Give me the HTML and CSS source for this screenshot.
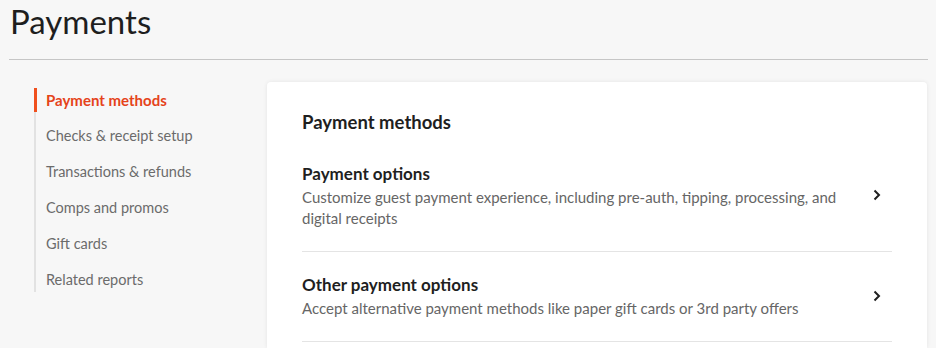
FILE: index.html
```html
<!DOCTYPE html>
<html lang="en">
<head>
  <meta charset="UTF-8">
  <meta name="viewport" content="width=device-width, initial-scale=1.0">
  <title>Payments</title>
  <link rel="stylesheet" href="styles.css">
</head>
<body>

  <header class="page-head">
    <h1>Payments</h1>
  </header>

  <div class="layout">
    <nav class="side-nav">
      <a href="#" class="nav-item active">Payment methods</a>
      <a href="#" class="nav-item">Checks &amp; receipt setup</a>
      <a href="#" class="nav-item">Transactions &amp; refunds</a>
      <a href="#" class="nav-item">Comps and promos</a>
      <a href="#" class="nav-item">Gift cards</a>
      <a href="#" class="nav-item">Related reports</a>
    </nav>

    <main class="card">
      <h2>Payment methods</h2>

      <a href="#" class="option">
        <div class="option-text">
          <h3>Payment options</h3>
          <p>Customize guest payment experience, including pre-auth, tipping, processing, and digital receipts</p>
        </div>
        <svg class="chevron" width="8" height="12" viewBox="0 0 8 12"><path d="M1.5 1.5 L6 6 L1.5 10.5" fill="none" stroke="#1f1f1f" stroke-width="2"/></svg>
      </a>

      <a href="#" class="option">
        <div class="option-text">
          <h3>Other payment options</h3>
          <p>Accept alternative payment methods like paper gift cards or 3rd party offers</p>
        </div>
        <svg class="chevron" width="8" height="12" viewBox="0 0 8 12"><path d="M1.5 1.5 L6 6 L1.5 10.5" fill="none" stroke="#1f1f1f" stroke-width="2"/></svg>
      </a>
    </main>
  </div>

</body>
</html>
```

FILE: styles.css
```css
* {
  box-sizing: border-box;
}

body {
  margin: 0;
  padding: 0;
  background-color: #f7f7f7;
  font-family: Lato, "Liberation Sans", sans-serif;
  color: #252525;
  overflow: hidden;
}

.page-head {
  margin: 0 8px 0 9px;
  border-bottom: 1px solid #c6c6c6;
  height: 60px;
}

.page-head h1 {
  margin: 0;
  padding: 0 0 0 1px;
  font-family: Lato, sans-serif;
  font-weight: 400;
  font-size: 33px;
  line-height: 42px;
  color: #1e1e1e;
}

.layout {
  display: flex;
  padding: 22px 9px 0 34px;
}

.side-nav {
  width: 233px;
  flex-shrink: 0;
  align-self: flex-start;
  display: flex;
  flex-direction: column;
  gap: 12px;
  margin-top: 6px;
  border-left: 2px solid #e2e2e2;
}

.nav-item {
  position: relative;
  display: block;
  padding-left: 10px;
  font-size: 14.5px;
  line-height: 24px;
  color: #6b6b6b;
  text-decoration: none;
}

.nav-item.active {
  color: #e5431a;
  font-weight: 700;
  font-size: 15px;
}

.nav-item.active::before {
  content: "";
  position: absolute;
  left: -2px;
  top: 0;
  bottom: 0;
  width: 3px;
  background-color: #f0501e;
}

.card {
  flex: 1;
  background-color: #fff;
  border-radius: 4px 4px 0 0;
  box-shadow: 0 0 4px rgba(0, 0, 0, 0.08);
  padding: 28px 35px 0 35px;
  height: 266px;
}

.card h2 {
  margin: 0 0 7px;
  font-size: 18.5px;
  line-height: 24px;
  font-weight: 700;
  color: #1f1f1f;
}

.option {
  display: flex;
  align-items: center;
  padding: 20px 0 22px;
  border-bottom: 1px solid #e4e4e4;
  text-decoration: none;
  color: inherit;
}

.option-text {
  flex: 1;
  padding-right: 28px;
}

.option h3 {
  margin: 0;
  font-size: 17px;
  line-height: 26px;
  font-weight: 700;
  color: #1f1f1f;
}

.option p {
  margin: 0;
  font-size: 15px;
  line-height: 21px;
  color: #666;
}

.chevron {
  flex-shrink: 0;
  margin-right: 11px;
}
```
